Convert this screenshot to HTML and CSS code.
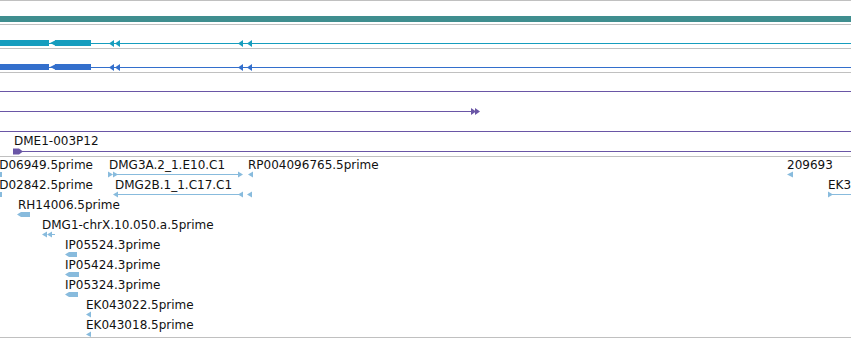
FILE: index.html
```html
<!DOCTYPE html>
<html lang="en">
<head>
  <meta charset="UTF-8" />
  <title>Genome browser tracks</title>
  <link rel="stylesheet" href="styles.css">
</head>
<body>
  <div class="browser">

    <!-- gene span -->
    <div class="track">
      <svg width="851" height="23">
        <rect class="span" x="0" y="15" width="851" height="6"/>
      </svg>
    </div>

    <!-- transcript, cyan -->
    <div class="track">
      <svg width="851" height="23" class="cyan">
        <rect x="0" y="18" width="851" height="1"/>
        <rect x="0" y="15" width="49" height="6"/>
        <polygon points="50,18 56,15 56,21"/>
        <rect x="55" y="15" width="36" height="6"/>
        <polygon points="109,18.5 114,15 114,22"/>
        <polygon points="115,18.5 120,15 120,22"/>
        <polygon points="238,18.5 243,15 243,22"/>
        <polygon points="247,18.5 252,15 252,22"/>
      </svg>
    </div>

    <!-- transcript, blue -->
    <div class="track">
      <svg width="851" height="23" class="blue">
        <rect x="0" y="18" width="851" height="1"/>
        <rect x="0" y="15" width="49" height="6"/>
        <polygon points="50,18 56,15 56,21"/>
        <rect x="55" y="15" width="36" height="6"/>
        <polygon points="109,18.5 114,15 114,22"/>
        <polygon points="115,18.5 120,15 120,22"/>
        <polygon points="238,18.5 243,15 243,22"/>
        <polygon points="247,18.5 252,15 252,22"/>
      </svg>
    </div>

    <!-- cDNA clones -->
    <div class="track">
      <svg width="851" height="83" class="purple">
        <rect x="0" y="18" width="851" height="1"/>
        <rect x="0" y="38" width="472" height="1"/>
        <polygon points="471,35 476,38.5 471,42"/>
        <polygon points="475,35 480,38.5 475,42"/>
        <rect x="0" y="58" width="851" height="1"/>
        <text class="label" x="14" y="72">DME1-003P12</text>
        <rect x="14" y="78" width="837" height="1"/>
        <polygon points="13,75.5 19,75.5 23,78.5 19,81.5 13,81.5"/>
      </svg>
    </div>

    <!-- ESTs -->
    <div class="track last">
      <svg width="851" height="180" class="est">
        <text class="label" x="93" y="12" text-anchor="end">D06949.5prime</text>
        <rect x="0" y="15" width="2" height="5"/>
        <text class="label" x="109" y="12">DMG3A.2_1.E10.C1</text>
        <polygon points="108,14.5 113,17.5 108,20.5"/>
        <polygon points="113,14.5 118,17.5 113,20.5"/>
        <rect x="117" y="17" width="122" height="1"/>
        <polygon points="238,14.5 243,17.5 238,20.5"/>
        <text class="label" x="248" y="12">RP004096765.5prime</text>
        <polygon points="248,17.5 253,14.5 253,20.5"/>
        <text class="label" x="787" y="12">209693</text>
        <polygon points="787,17.5 793,14.5 793,20.5"/>

        <text class="label" x="93" y="32" text-anchor="end">D02842.5prime</text>
        <rect x="0" y="35" width="2" height="5"/>
        <text class="label" x="115" y="32">DMG2B.1_1.C17.C1</text>
        <polygon points="113,37.5 118,34.5 118,40.5"/>
        <rect x="117" y="37" width="122" height="1"/>
        <polygon points="238,37.5 243,34.5 243,40.5"/>
        <polygon points="247,37.5 252,34.5 252,40.5"/>
        <text class="label" x="828" y="32">EK3</text>
        <polygon points="828,34.5 833,37.5 828,40.5"/>
        <rect x="832" y="37" width="19" height="1"/>

        <text class="label" x="18" y="52">RH14006.5prime</text>
        <polygon points="17,57.5 21,55 30,55 30,60 21,60"/>

        <text class="label" x="42" y="72">DMG1-chrX.10.050.a.5prime</text>
        <polygon points="42,77.5 47,74.5 47,80.5"/>
        <polygon points="47,77.5 52,74.5 52,80.5"/>
        <rect x="51" y="77" width="4" height="1"/>

        <text class="label" x="65" y="92">IP05524.3prime</text>
        <polygon points="65,97.5 69,95 77,95 77,100 69,100"/>

        <text class="label" x="65" y="112">IP05424.3prime</text>
        <polygon points="65,117.5 69,115 79,115 79,120 69,120"/>

        <text class="label" x="65" y="132">IP05324.3prime</text>
        <polygon points="65,137.5 69,135 78,135 78,140 69,140"/>

        <text class="label" x="86" y="152">EK043022.5prime</text>
        <polygon points="86,157.5 91,154.5 91,160.5"/>

        <text class="label" x="86" y="172">EK043018.5prime</text>
        <polygon points="86,177.5 91,174.5 91,180"/>
      </svg>
    </div>

  </div>
</body>
</html>
```

FILE: styles.css
```css
* {
  margin: 0;
  padding: 0;
  box-sizing: border-box;
}

body {
  background: #fff;
  font-family: 'DejaVu Sans', sans-serif;
  overflow: hidden;
}

.browser {
  width: 851px;
  border-bottom: 1px solid #c0c0c0;
}

.track {
  border-top: 1px solid #c0c0c0;
}

.track svg {
  display: block;
}

.span {
  fill: #3f8e8f;
}

.cyan {
  fill: #169dbe;
}

.blue {
  fill: #336fcc;
}

.purple {
  fill: #6a56a6;
}

.est {
  fill: #88bbdd;
}

.label {
  font-family: 'DejaVu Sans', sans-serif;
  font-size: 12px;
  fill: #111;
}
```
